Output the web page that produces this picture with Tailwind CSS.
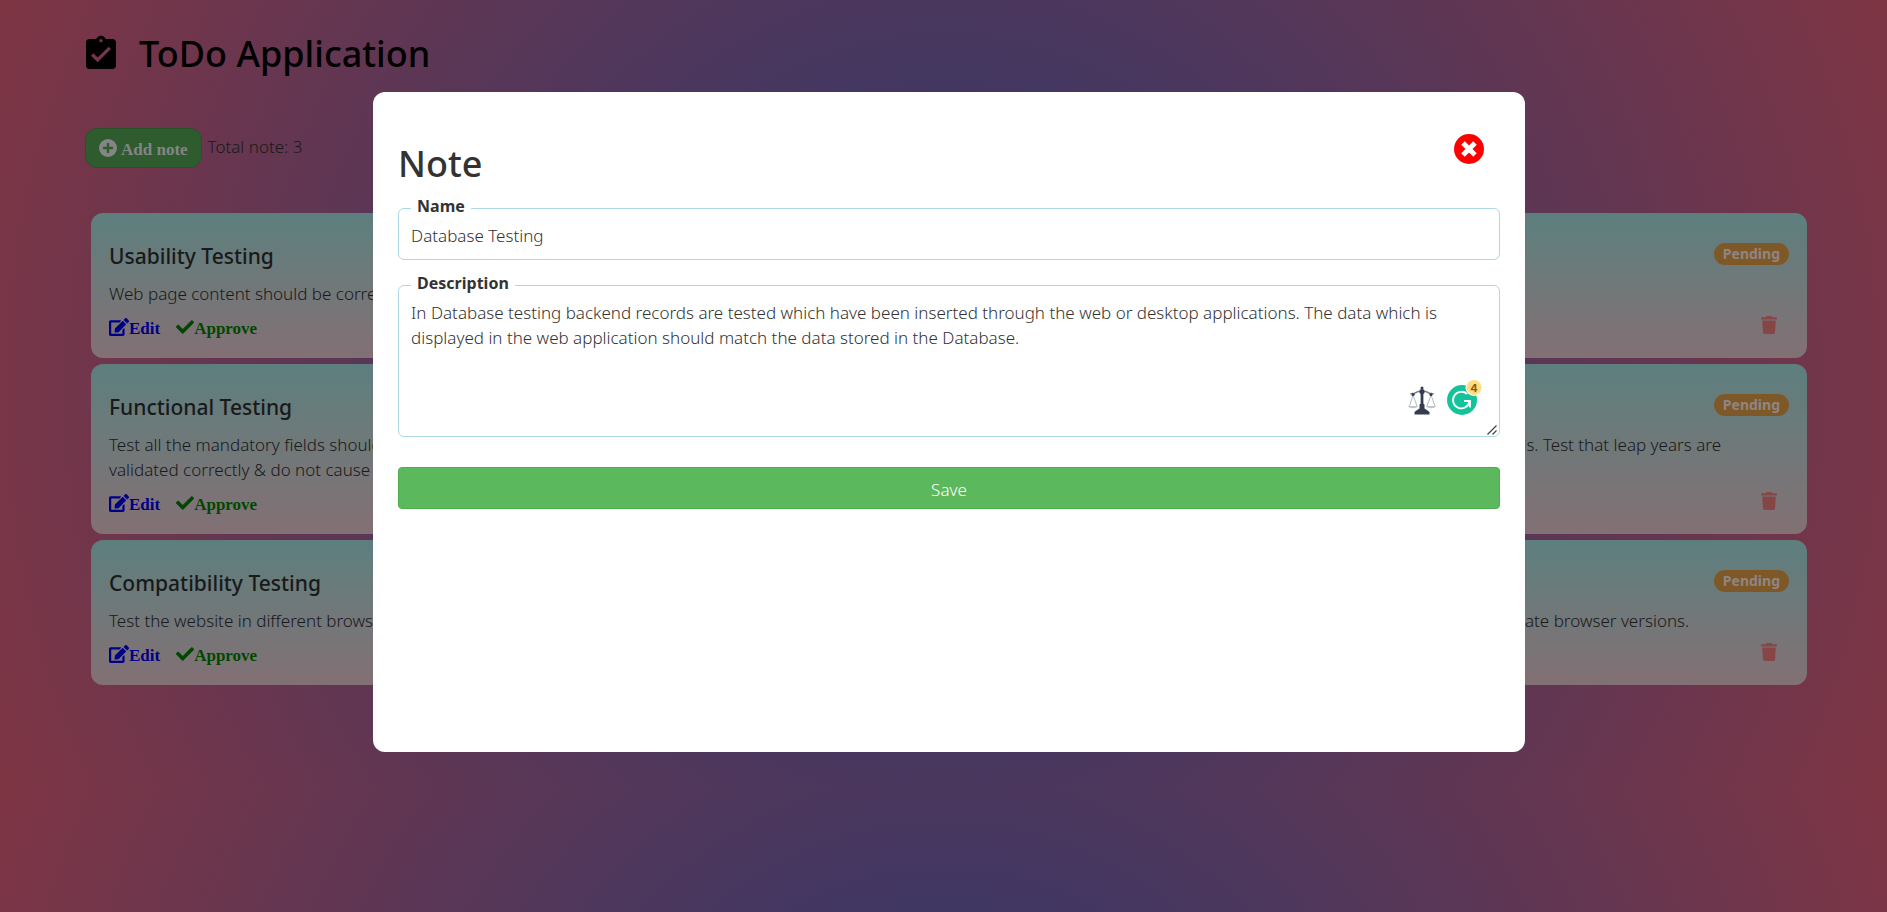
<!DOCTYPE html>
<html lang="en">
<head>
<meta charset="utf-8">
<title>ToDo Application</title>
<script src="https://cdn.jsdelivr.net/npm/@tailwindcss/browser@4"></script>
</head>
<body class="relative min-h-screen bg-[radial-gradient(circle_at_center,#2a386e_0%,#7e3544_100%)] bg-[length:100%_787px] font-['Noto_Sans',sans-serif] text-[17px]/[25px] font-light text-[#191919]">

<svg class="hidden">
  <symbol id="edit" viewBox="0 0 576 512"><path d="M402.6 83.200l90.200 90.200c3.800 3.800 3.800 10 0 13.800L274.400 405.600l-92.800 10.300c-12.400 1.400-22.900-9.100-21.500-21.500l10.300-92.800L388.800 83.200c3.800-3.800 10-3.800 13.800 0zm162-22.900l-48.800-48.800c-15.200-15.200-39.900-15.200-55.200 0l-35.400 35.400c-3.800 3.800-3.800 10 0 13.800l90.200 90.200c3.800 3.800 10 3.800 13.800 0l35.400-35.400c15.200-15.300 15.200-40 0-55.200zM384 346.200V448H64V128h229.800c3.200 0 6.200-1.300 8.500-3.500l40-40c7.600-7.600 2.200-20.500-8.500-20.500H48C21.500 64 0 85.500 0 112v352c0 26.500 21.500 48 48 48h352c26.500 0 48-21.500 48-48V306.200c0-10.700-12.900-16-20.500-8.500l-40 40c-2.200 2.300-3.500 5.300-3.500 8.500z"/></symbol>
  <symbol id="check" viewBox="0 0 512 512"><path d="M173.898 439.404l-166.400-166.400c-9.997-9.997-9.997-26.206 0-36.204l36.203-36.204c9.997-9.998 26.207-9.998 36.204 0L192 312.690 432.095 72.596c9.997-9.997 26.207-9.997 36.204 0l36.203 36.204c9.997 9.997 9.997 26.206 0 36.204l-294.400 294.401c-9.998 9.997-26.207 9.997-36.204-.001z"/></symbol>
  <symbol id="trash" viewBox="0 0 448 512"><path d="M432 32H312l-9.400-18.700A24 24 0 0 0 281.100 0H166.800a23.720 23.720 0 0 0-21.400 13.300L136 32H16A16 16 0 0 0 0 48v32a16 16 0 0 0 16 16h416a16 16 0 0 0 16-16V48a16 16 0 0 0-16-16zM32 128l21.200 339a48 48 0 0 0 47.900 45h245.800a48 48 0 0 0 47.900-45L416 128z"/></symbol>
</svg>

<main class="pt-8 pr-20 pl-[85px]">
  <header class="flex items-center gap-[18px]">
    <svg class="-ml-1 size-10 text-black" viewBox="0 0 24 24" fill="currentColor"><path d="M19 3h-4.180C14.400 1.840 13.300 1 12 1s-2.400.840-2.820 2H5c-1.100 0-2 .9-2 2v14c0 1.100.9 2 2 2h14c1.100 0 2-.9 2-2V5c0-1.100-.9-2-2-2zm-7 0c.550 0 1 .450 1 1s-.450 1-1 1-1-.450-1-1 .450-1 1-1zm-2 14l-4-4 1.410-1.410L10 14.170l6.590-6.590L18 9l-8 8z"/></svg>
    <h1 class="text-4xl/[44px] font-medium text-black">ToDo Application</h1>
  </header>

  <div class="mt-[52px] flex items-center gap-1.5">
    <button class="flex h-10 items-center gap-1 rounded-xl border border-[#265226] bg-[#2e5c2f] px-[13px] pt-0.5 font-['Liberation_Serif',serif] text-[17px] font-bold text-[#858585]">
      <svg class="mb-0.5 size-[18px]" viewBox="0 0 18 18"><circle cx="9" cy="9" r="9" fill="#858585"/><path d="M9 4v10M4 9h10" stroke="#2e5c2f" stroke-width="2.400"/></svg>
      Add note
    </button>
    <p class="pb-1">Total note: 3</p>
  </div>

  <section class="mt-[45px] flex flex-col gap-1.5 pl-1.5">
    <article class="rounded-xl bg-linear-to-b from-[#5c7f7e] to-[#827074] px-[18px] pt-[30px] pb-[14px]">
      <div class="flex items-start justify-between">
        <h2 class="text-[21px]/[26px] font-medium">Usability Testing</h2>
        <span class="rounded-full bg-[#7f5827] px-[9px] text-sm/[22px] font-bold text-[#8f8584]">Pending</span>
      </div>
      <p class="mt-3">Web page content should be correct without any spelling or grammatical errors.</p>
      <div class="mt-2 flex items-center gap-4 font-['Liberation_Serif',serif] text-[17px]/[30px] font-bold">
        <button class="flex items-center text-[#000086]"><svg class="mb-1 h-[18px] w-5" fill="currentColor"><use href="#edit"/></svg>Edit</button>
        <button class="flex items-center text-[#004800]"><svg class="mb-1 size-[18px]" fill="currentColor"><use href="#check"/></svg>Approve</button>
        <button class="mr-3 mb-2 ml-auto text-[#874646]" aria-label="Delete"><svg class="h-[18px] w-4" fill="currentColor"><use href="#trash"/></svg></button>
      </div>
    </article>
    <article class="rounded-xl bg-linear-to-b from-[#5c7f7e] to-[#827074] px-[18px] pt-[30px] pb-[14px]">
      <div class="flex items-start justify-between">
        <h2 class="text-[21px]/[26px] font-medium">Functional Testing</h2>
        <span class="rounded-full bg-[#7f5827] px-[9px] text-sm/[22px] font-bold text-[#8f8584]">Pending</span>
      </div>
      <p class="mt-3">Test all the mandatory fields should be validated. Test the asterisk sign should display for all the mandatory fields. Test the system should not display the error message for optional fields. Test that leap years are validated correctly &amp; do not cause errors/miscalculations.</p>
      <div class="mt-2 flex items-center gap-4 font-['Liberation_Serif',serif] text-[17px]/[30px] font-bold">
        <button class="flex items-center text-[#000086]"><svg class="mb-1 h-[18px] w-5" fill="currentColor"><use href="#edit"/></svg>Edit</button>
        <button class="flex items-center text-[#004800]"><svg class="mb-1 size-[18px]" fill="currentColor"><use href="#check"/></svg>Approve</button>
        <button class="mr-3 mb-2 ml-auto text-[#874646]" aria-label="Delete"><svg class="h-[18px] w-4" fill="currentColor"><use href="#trash"/></svg></button>
      </div>
    </article>
    <article class="rounded-xl bg-linear-to-b from-[#5c7f7e] to-[#827074] px-[18px] pt-[30px] pb-[14px]">
      <div class="flex items-start justify-between">
        <h2 class="text-[21px]/[26px] font-medium">Compatibility Testing</h2>
        <span class="rounded-full bg-[#7f5827] px-[9px] text-sm/[22px] font-bold text-[#8f8584]">Pending</span>
      </div>
      <p class="mt-3">Test the website in different browsers (IE, Firefox, Chrome, Safari and Opera) and ensure the website is displayed properly. Test the HTML version being used is compatible with appropriate browser versions.</p>
      <div class="mt-2 flex items-center gap-4 font-['Liberation_Serif',serif] text-[17px]/[30px] font-bold">
        <button class="flex items-center text-[#000086]"><svg class="mb-1 h-[18px] w-5" fill="currentColor"><use href="#edit"/></svg>Edit</button>
        <button class="flex items-center text-[#004800]"><svg class="mb-1 size-[18px]" fill="currentColor"><use href="#check"/></svg>Approve</button>
        <button class="mr-3 mb-2 ml-auto text-[#874646]" aria-label="Delete"><svg class="h-[18px] w-4" fill="currentColor"><use href="#trash"/></svg></button>
      </div>
    </article>
  </section>
</main>

<div class="absolute inset-0 flex items-start justify-center pt-[92px] pl-[11px]">
  <div role="dialog" aria-labelledby="dialog-title" class="w-[61.4%] rounded-xl bg-white px-[25px] pt-[42px] pb-[243px] text-[#333]">
    <header class="flex items-start justify-between pr-4">
      <h2 id="dialog-title" class="pt-2 text-4xl/[44px] font-medium">Note</h2>
      <button aria-label="Close"><svg class="size-[30px]" viewBox="0 0 30 30"><circle cx="15" cy="15" r="15" fill="#f00"/><path d="M9 9l12 12M21 9l-12 12" stroke="#fff" stroke-width="5"/></svg></button>
    </header>
    <form>
      <div class="relative mt-[22px]">
        <label for="name" class="absolute -top-3.5 left-[13px] bg-white px-1.5 text-base/[25px] font-bold">Name</label>
        <input id="name" value="Database Testing" class="block h-[52px] w-full rounded-md border border-[#add8e6] px-3 pt-1 pb-0.5">
      </div>
      <div class="relative mt-[25px]">
        <label for="description" class="absolute -top-3.5 left-[13px] bg-white px-1.5 text-base/[25px] font-bold">Description</label>
        <textarea id="description" class="block h-[152px] w-full resize-none rounded-md border border-[#add8e6] px-3 py-[14px]">In Database testing backend records are tested which have been inserted through the web or desktop applications. The data which is displayed in the web application should match the data stored in the Database.</textarea>
        <svg class="absolute right-[3px] bottom-0.5 size-[10px]" viewBox="0 0 10 10" stroke="#444" stroke-width="1.300"><path d="M.5 9.500l9-9M5.500 9.500l4-4"/></svg>
        <div class="absolute right-[18px] bottom-[22px] flex items-end gap-[11px]">
          <svg class="h-[29px] w-7" viewBox="0 0 28 29">
            <path d="M5 8L10 5.500L18 5.500L23 8" fill="none" stroke="#77858d" stroke-width="1.600"/>
            <path d="M2 8l3-1M26 8l-3-1" stroke="#77858d"/>
            <path d="M5 9L1.500 20M5 9L9 20M23 9l-4 11M23 9l4 11" fill="none" stroke="#a9b4b9" stroke-width=".9"/>
            <path d="M0 20h10c-1 3-9 3-10 0zM18 20h10c-1 3-9 3-10 0z" fill="#bcc8cc"/>
            <path d="M12.600 4h2.800v16h-2.800z" fill="#343c4e"/>
            <circle cx="14" cy="2" r="1.500" fill="#343c4e"/><circle cx="14" cy="5.500" r="2.600" fill="#343c4e"/>
            <circle cx="5" cy="8.500" r="1.600" fill="#343c4e"/><circle cx="23" cy="8.500" r="1.600" fill="#343c4e"/>
            <path d="M11.500 18.500q2.500-2 5 0v4q3 1.500 5 3.500v2.500h-15v-2.500q2-2 5-3.500z" fill="#343c4e"/>
          </svg>
          <svg class="h-[35px] w-[35px]" viewBox="0 0 35 35">
            <circle cx="15" cy="20" r="15" fill="#15c39a"/>
            <path d="M20 14a8.300 8.300 0 1 0 2.500 7.500M17 21h6v6.500" fill="none" stroke="#fff" stroke-width="1.800"/>
            <circle cx="27" cy="7.500" r="8.500" fill="#fff"/><circle cx="27" cy="7.500" r="7.500" fill="#ffdd80"/>
            <text x="27" y="11.500" text-anchor="middle" font-size="11" font-weight="700" font-family="Inter" fill="#945700">4</text>
          </svg>
        </div>
      </div>
      <button class="mt-[30px] h-[42px] w-full rounded border border-[#4cae4c] bg-[#5cb85c] pt-0.5 text-white">Save</button>
    </form>
  </div>
</div>
</body>
</html>
